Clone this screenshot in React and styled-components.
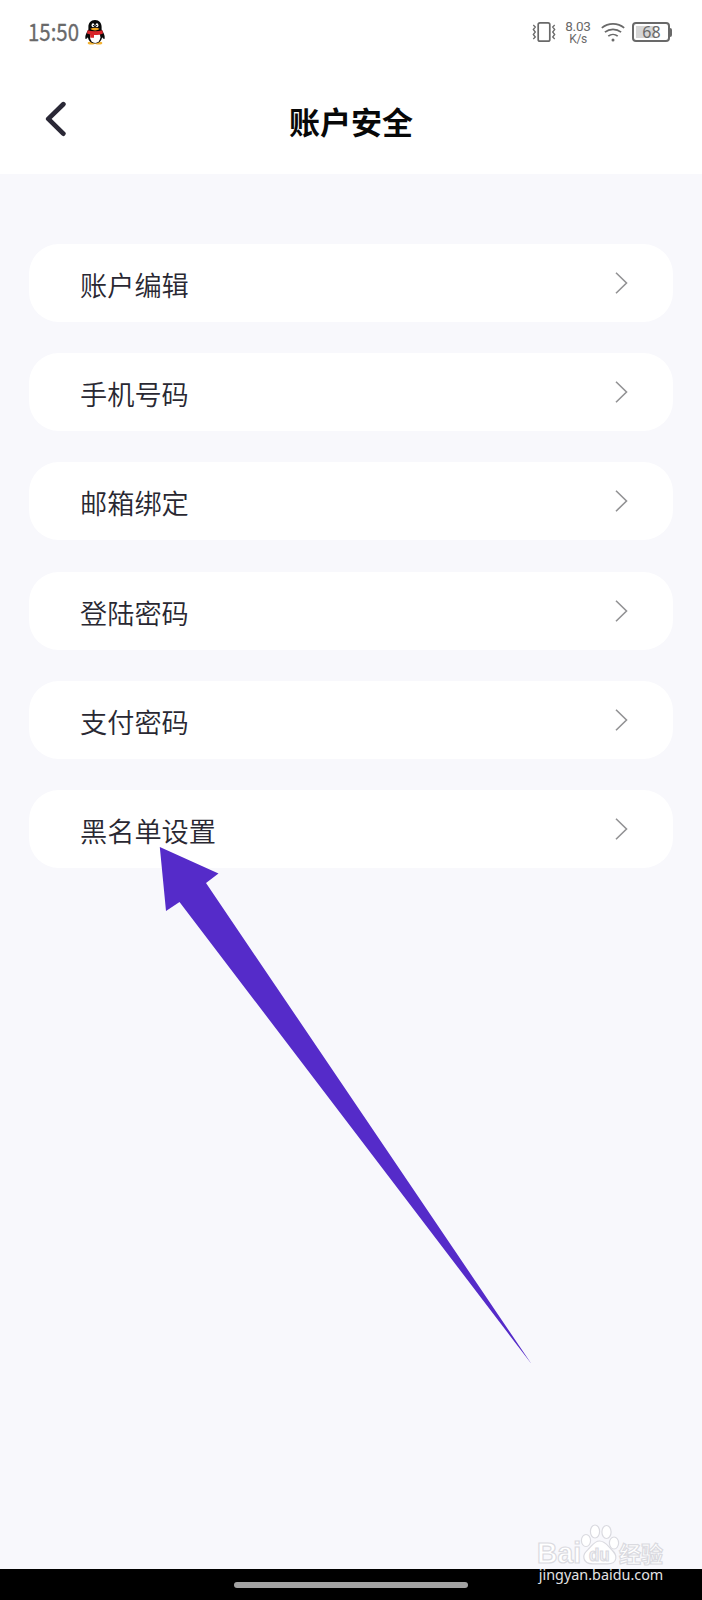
import styled, { createGlobalStyle } from "styled-components";

const items = [
	"账户编辑",
	"手机号码",
	"邮箱绑定",
	"登陆密码",
	"支付密码",
	"黑名单设置",
];

const App = () => {
	return (
		<>
			<GlobalStyle />
			<Screen>
				<Top>
					<StatusBar>
						<Time>15:50</Time>
						<Penguin />
						<Spacer />
						<VibrateIcon />
						<Speed>
							<SpeedValue>8.03</SpeedValue>
							<SpeedUnit>K/s</SpeedUnit>
						</Speed>
						<WifiIcon />
						<Battery>
							<BatteryBody>68</BatteryBody>
							<BatteryCap />
						</Battery>
					</StatusBar>
					<Header>
						<BackButton aria-label="返回">
							<svg width="24" height="38" viewBox="0 0 24 38" fill="none">
								<path
									d="M18.3 4.2 3.3 18.9l15 14.7"
									stroke="#2a2836"
									strokeWidth="4.8"
									strokeLinecap="round"
									strokeLinejoin="round"
								/>
							</svg>
						</BackButton>
						<Title>账户安全</Title>
					</Header>
				</Top>
				<List>
					{items.map((item) => (
						<Row key={item}>
							<Label>{item}</Label>
							<svg width="14" height="24" viewBox="0 0 14 24" fill="none">
								<path d="M2 1.800 12.500 12 2 22.200" stroke="#929294" strokeWidth="1.6" />
							</svg>
						</Row>
					))}
				</List>
				<NavBar>
					<HomeIndicator />
				</NavBar>
				<Arrow viewBox="0 0 373 517">
					<path d="M.8 0 59.500 26.500 47 36 372.500 517 20.500 55 7 64Z" fill="#552bc9" />
				</Arrow>
				<Watermark />
			</Screen>
		</>
	);
};

const Penguin = () => (
	<PenguinSvg viewBox="0 0 20 25">
		<ellipse cx="6.3" cy="23" rx="3.6" ry="1.5" fill="#f3b234" />
		<ellipse cx="13.7" cy="23" rx="3.6" ry="1.5" fill="#f3b234" />
		<path
			d="M10 0C5.800 0 3.400 3 3.400 7v2.500C1.500 12.500 0 15.500.3 18.200c.2 1.500 1.500.5 2.600-1 .5 3.700 3.300 6.200 7.100 6.200s6.600-2.500 7.100-6.200c1.100 1.500 2.400 2.500 2.600 1 .3-2.700-1.200-5.700-3.100-8.700V7C16.600 3 14.200 0 10 0Z"
			fill="#090909"
		/>
		<ellipse cx="10.2" cy="17.3" rx="5.2" ry="5.6" fill="#fff" />
		<ellipse cx="8" cy="5.3" rx="1.4" ry="2" fill="#fff" />
		<ellipse cx="12" cy="5.3" rx="1.4" ry="2" fill="#fff" />
		<circle cx="8.5" cy="5.6" r=".7" />
		<circle cx="11.6" cy="5.6" r=".7" />
		<path d="M5.400 8.700C8 7.300 12 7.300 14.600 8.700 12.500 11 7.500 11 5.400 8.700Z" fill="#f3a51c" />
		<path
			d="M2.500 10.300c4.600 1.400 10.200 1.400 14.900 0l.6 3.200c-2.800 1.300-6 1.600-9 1.500v2.700H5.200v-3.300l-3.200-1Z"
			fill="#d9252b"
		/>
	</PenguinSvg>
);

const VibrateIcon = () => (
	<VibrateSvg viewBox="0 0 24 22" fill="none" stroke="#696969">
		<rect x="6.2" y="1.8" width="11.6" height="18.4" rx="1.8" strokeWidth="1.7" />
		<path
			d="m1.300 4 2 2-2 2.500 2 2.500-2 2.500 2 2.500-2 2M22.700 4l-2 2 2 2.500-2 2.500 2 2.500-2 2.500 2 2"
			strokeWidth="1.3"
		/>
	</VibrateSvg>
);

const WifiIcon = () => (
	<WifiSvg viewBox="0 0 24 20" fill="none" stroke="#696969" strokeWidth="1.7">
		<path d="M.8 5.800c6.500-5.300 15.900-5.300 22.400 0M3.900 10.200c4.700-3.900 11.500-3.900 16.200 0M7.300 14.200c2.700-2.300 6.700-2.300 9.400 0" />
		<circle cx="12" cy="18" r="1.5" fill="#696969" stroke="none" />
	</WifiSvg>
);

const Watermark = () => (
	<WatermarkSvg viewBox="0 0 130 64">
		<g fill="#fff" stroke="#dadae0" strokeWidth="1.2">
			<text
				className="latin"
				x="0"
				y="42.3"
				fontSize="29.5"
				fontWeight="700"
				textLength="44"
				lengthAdjust="spacingAndGlyphs"
			>
				Bai
			</text>
			<ellipse cx="49" cy="19.5" rx="4.6" ry="6" />
			<ellipse cx="58" cy="10.5" rx="4.6" ry="6.5" />
			<ellipse cx="69.5" cy="11" rx="4.6" ry="6.5" />
			<ellipse cx="77" cy="22" rx="4.6" ry="6" />
			<path d="M62.500 20c-5 0-7.300 4.200-10.500 7.500-3.500 3.500-6 5.500-5 10 1.200 5.500 6.500 5.500 10 5.300h12c4.500.3 9-.5 9.800-5.300.7-4.500-2-6.500-5.300-10-3.200-3.500-6-7.500-11-7.500Z" />
			<text
				className="latin"
				x="52"
				y="39.5"
				fontSize="18"
				fontWeight="700"
				textLength="20.5"
				lengthAdjust="spacingAndGlyphs"
				fill="#f5f5f9"
			>
				du
			</text>
			<text
				className="cjk"
				x="82"
				y="41"
				fontSize="22"
				fontWeight="700"
				textLength="44"
				lengthAdjust="spacingAndGlyphs"
			>
				经验
			</text>
		</g>
		<text x="1.8" y="59" fontSize="14.2" fill="#e4e4e4" textLength="124.5" lengthAdjust="spacingAndGlyphs">
			jingyan.baidu.com
		</text>
	</WatermarkSvg>
);

const GlobalStyle = createGlobalStyle`
	* {
		box-sizing: border-box;
	}
	body {
		margin: 0;
		font-family: "Noto Sans CJK SC", "Noto Sans", sans-serif;
	}
	svg {
		display: block;
		flex-shrink: 0;
	}
`;

const Screen = styled.div`
	position: relative;
	display: flex;
	flex-direction: column;
	width: 702px;
	height: 1600px;
	overflow: hidden;
	background-color: #f8f8fc;
`;

const Top = styled.div`
	height: 173.5px;
	background-color: #fff;
`;

const StatusBar = styled.div`
	display: flex;
	align-items: center;
	height: 64px;
	padding: 0 30px 0 28px;
	color: #696969;
`;

const Time = styled.div`
	width: 57px;
	padding-bottom: 2px;
	font-size: 24px;
	line-height: 30px;
	white-space: nowrap;
	-webkit-text-stroke: 0.3px #696969;
	transform: scaleX(0.85);
	transform-origin: left;
`;

const PenguinSvg = styled.svg`
	width: 20px;
	height: 25px;
`;

const Spacer = styled.div`
	flex: 1;
`;

const VibrateSvg = styled.svg`
	width: 24px;
	height: 22px;
`;

const Speed = styled.div`
	display: flex;
	flex-direction: column;
	align-items: center;
	width: 26px;
	margin: 0 10px 0 9px;
	font-family: Roboto, sans-serif;
`;

const SpeedValue = styled.div`
	font-size: 13.5px;
	line-height: 14px;
	letter-spacing: -0.2px;
`;

const SpeedUnit = styled.div`
	font-size: 12px;
	line-height: 13px;
	letter-spacing: -0.4px;
`;

const WifiSvg = styled.svg`
	width: 24px;
	height: 20px;
`;

const Battery = styled.div`
	display: flex;
	align-items: center;
	margin-left: 7px;
`;

const BatteryBody = styled.div`
	width: 38px;
	height: 20px;
	padding-left: 1px;
	border: 2px solid #696969;
	border-radius: 4px;
	background: linear-gradient(#d6d6d6, #d6d6d6) 2px 2px / 19px 12px no-repeat;
	font-family: "Noto Sans", sans-serif;
	font-size: 16px;
	line-height: 16px;
	text-align: center;
`;

const BatteryCap = styled.div`
	width: 2px;
	height: 9px;
	border-radius: 0 2px 2px 0;
	background-color: #696969;
`;

const Header = styled.div`
	display: grid;
	grid-template-columns: 100px 1fr 100px;
	align-items: center;
	height: 110px;
`;

const BackButton = styled.button`
	display: flex;
	padding: 0 0 0 45px;
	border: none;
	background: none;
`;

const Title = styled.h1`
	margin: 3px 0 0;
	color: #080808;
	font-size: 31px;
	font-weight: 700;
	line-height: 44px;
	text-align: center;
`;

const List = styled.div`
	display: flex;
	flex: 1;
	flex-direction: column;
	gap: 31.2px;
	padding: 70.5px 29px 0;
`;

const Row = styled.div`
	display: flex;
	align-items: center;
	justify-content: space-between;
	height: 78px;
	padding: 0 45px 0 51px;
	border-radius: 30px;
	background-color: #fff;
`;

const Label = styled.div`
	padding-top: 2px;
	color: #292832;
	font-size: 27.2px;
	font-weight: 350;
	line-height: 40px;
`;

const NavBar = styled.div`
	display: flex;
	justify-content: center;
	height: 31px;
	padding-top: 13px;
	background-color: #000;
`;

const HomeIndicator = styled.div`
	width: 234px;
	height: 6px;
	border-radius: 3px;
	background-color: #a2a2a2;
`;

/* drawn over the list, pointing at the last row */
const Arrow = styled.svg`
	position: absolute;
	top: 847px;
	left: 159px;
	width: 373px;
	height: 517px;
`;

const WatermarkSvg = styled.svg`
	position: absolute;
	top: 1521px;
	left: 537px;
	width: 130px;
	height: 64px;
	font-family: "Noto Sans", sans-serif;
	.latin {
		font-family: "Liberation Sans", sans-serif;
	}
	.cjk {
		font-family: "Noto Sans CJK SC", sans-serif;
	}
`;

export default App;
